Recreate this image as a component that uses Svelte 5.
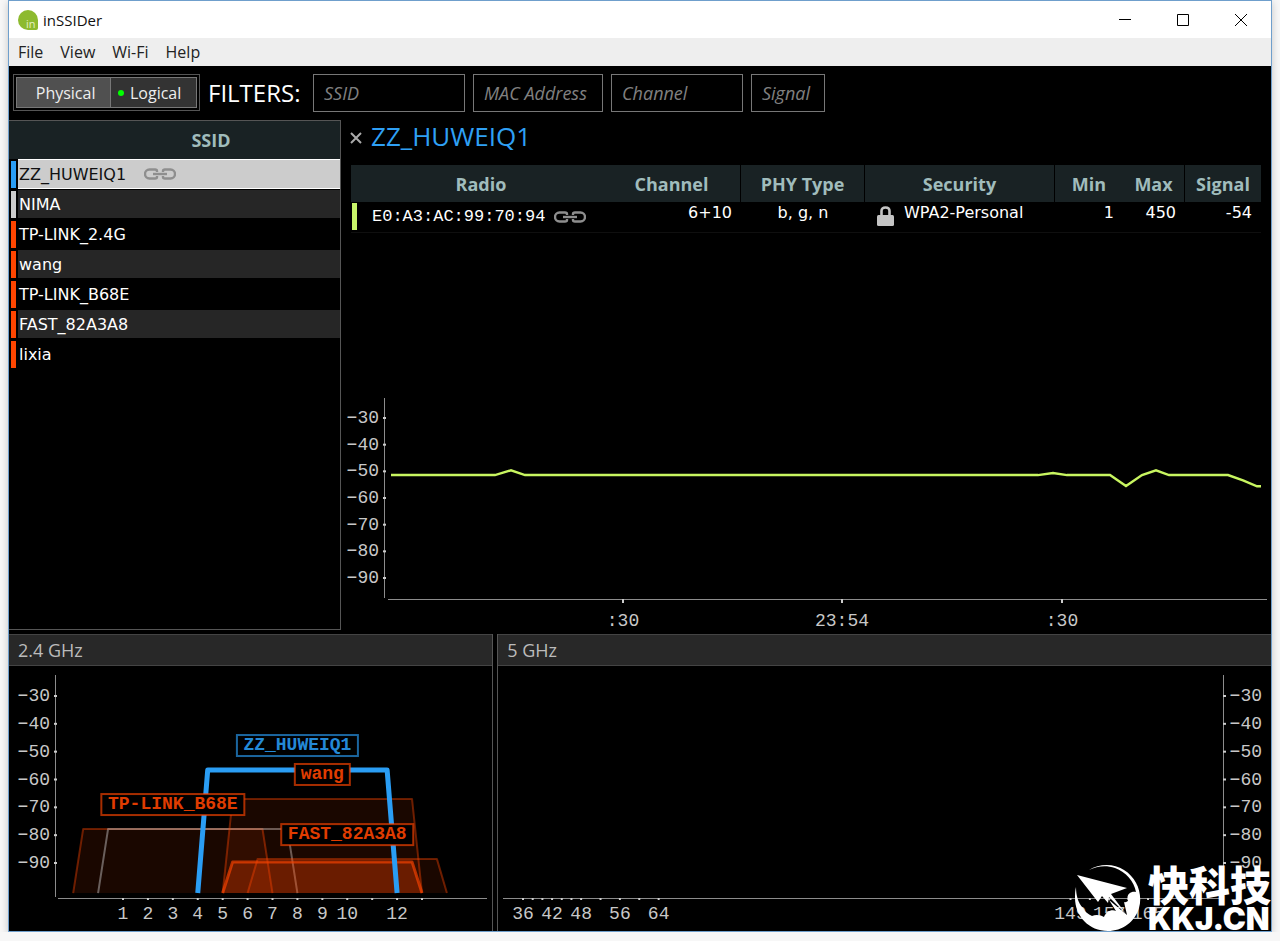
<script lang="ts">
interface Network {
  ssid: string;
  color: string;
  linked?: boolean;
}

interface Shape {
  from: number; // first channel
  to: number; // last channel
  dbm: number;
  color: string;
  line: number;
  stroke: number;
  fill: number;
  label?: string;
}

const BLUE = "#2a9df4";
const ORANGE = "#ff4500";

const menus = ["File", "View", "Wi-Fi", "Help"];

const filters = [
  { name: "SSID", width: 152 },
  { name: "MAC Address", width: 130 },
  { name: "Channel", width: 132 },
  { name: "Signal", width: 74 },
];

const networks: Network[] = [
  { ssid: "ZZ_HUWEIQ1", color: BLUE, linked: true },
  { ssid: "NIMA", color: "#cccccc" },
  { ssid: "TP-LINK_2.4G", color: ORANGE },
  { ssid: "wang", color: ORANGE },
  { ssid: "TP-LINK_B68E", color: ORANGE },
  { ssid: "FAST_82A3A8", color: ORANGE },
  { ssid: "lixia", color: ORANGE },
];

const columns = [
  { name: "Radio", width: 260 },
  { name: "Channel", width: 130 },
  { name: "PHY Type", width: 124 },
  { name: "Security", width: 190 },
  { name: "Min", width: 68 },
  { name: "Max", width: 62 },
  { name: "Signal", width: 76 },
];

const levels = [-30, -40, -50, -60, -70, -80, -90];

// [position on the time axis, dBm]
const history = [
  [0, -51.4], [104, -51.4], [120, -49.6], [134, -51.4], [647, -51.4],
  [662, -50.6], [676, -51.4], [719, -51.4], [735, -55.5], [751, -51.4],
  [765, -49.6], [778, -51.4], [837, -51.4], [852, -53.4], [866, -55.6], [870, -55.6],
];
const times = [
  { at: 232, text: ":30" },
  { at: 451, text: "23:54" },
  { at: 671, text: ":30" },
];

const shapes: Shape[] = [
  { from: -1, to: 7, dbm: -77.8, color: ORANGE, line: 2, stroke: 0.4, fill: 0.1, label: "TP-LINK_B68E" },
  { from: 0, to: 8, dbm: -77.8, color: "#cccccc", line: 2, stroke: 0.45, fill: 0 },
  { from: 5, to: 13, dbm: -67, color: ORANGE, line: 2, stroke: 0.4, fill: 0.1, label: "wang" },
  { from: 6, to: 14, dbm: -88.6, color: ORANGE, line: 2, stroke: 0.4, fill: 0.1, label: "FAST_82A3A8" },
  { from: 5, to: 13, dbm: -89.6, color: ORANGE, line: 3, stroke: 0.65, fill: 0.28 },
  { from: 4, to: 12, dbm: -56.6, color: BLUE, line: 5, stroke: 1, fill: 0, label: "ZZ_HUWEIQ1" },
];

const channels24 = [1, 2, 3, 4, 5, 6, 7, 8, 9, 10, 11, 12, 13];
const hidden24 = [11, 13];
const channels5 = [36, 38, 40, 42, 44, 46, 48, 52, 56, 60, 64, 149, 153, 157, 161, 165];
const labels5 = [36, 42, 48, 56, 64, 149, 157, 165];

let mode = $state("Logical");
let selected = $state("ZZ_HUWEIQ1");

let timeW = $state(930);
let w24 = $state(483);
let w5 = $state(773);
let h = $state(265);

const minus = (n: number) => "\u2212" + Math.abs(n);

// time graph
const timeX = (v: number) => 50 + (v / 870) * (timeW - 60);
const timeY = (dbm: number) => 24 + (-30 - dbm) * 2.667;
let trace = $derived(history.map(([t, d]) => `${timeX(t)},${timeY(d)}`).join(" "));

// channel graphs
let bandStep = $derived((h - 98) / 60);
const bandY = (dbm: number) => 30 + (-30 - dbm) * bandStep;
const x24 = (ch: number) => 114 + (ch - 1) * ((w24 - 184) / 12);
const x5 = (ch: number) => 25 + (ch - 36) * ((w5 - 148) / 129);

function outline(s: Shape) {
  const base = bandY(-100.8);
  const top = bandY(s.dbm);
  return `M${x24(s.from)} ${base}L${x24(s.from + 0.4)} ${top}H${x24(s.to - 0.4)}L${x24(s.to)} ${base}`;
}
</script>

{#snippet link()}
  <svg class="link" width="32" height="12" viewBox="0 0 32 12" aria-hidden="true">
    <path d="M13 4V3Q13 1.5 11 1.5H5.5A4.5 4.5 0 0 0 5.5 10.5H11Q13 10.5 13 9V8M19 4V3Q19 1.5 21 1.5H26.5A4.5 4.5 0 0 1 26.5 10.5H21Q19 10.5 19 9V8" />
    <path d="M9 6H23" />
  </svg>
{/snippet}

<div class="window">
  <header class="titlebar">
    <svg class="logo" width="20" height="20" viewBox="0 0 20 20" aria-hidden="true">
      <path d="M10 0A10 10 0 0 1 20 10V18Q20 20 18 20H10A10 10 0 0 1 10 0Z" fill="#8dba2f" />
      <text x="8" y="18" font-size="11" fill="#e4f0c4">in</text>
    </svg>
    <span class="title">inSSIDer</span>
    <button class="control" aria-label="Minimize">
      <svg width="12" height="12" viewBox="0 0 12 12"><path d="M0 5.5H12" /></svg>
    </button>
    <button class="control" aria-label="Maximize">
      <svg width="12" height="12" viewBox="0 0 12 12"><path d="M.5 .5H11.5V11.5H.5Z" /></svg>
    </button>
    <button class="control" aria-label="Close">
      <svg width="12" height="12" viewBox="0 0 12 12"><path d="M0 0L12 12M12 0L0 12" /></svg>
    </button>
  </header>

  <nav class="menu">
    {#each menus as item (item)}
      <button>{item}</button>
    {/each}
  </nav>

  <div class="toolbar">
    <div class="modes">
      {#each ["Physical", "Logical"] as m (m)}
        <button class:active={mode === m} aria-pressed={mode === m} onclick={() => (mode = m)}>
          <i></i>{m}
        </button>
      {/each}
    </div>
    <span class="filters-label">FILTERS:</span>
    {#each filters as f (f.name)}
      <input type="text" placeholder={f.name} aria-label={f.name} style:width="{f.width}px" />
    {/each}
  </div>

  <main>
    <section class="upper">
      <div class="sidebar">
        <table>
          <thead>
            <tr><th class="strip"></th><th class="ssid-head">SSID</th></tr>
          </thead>
          <tbody>
            {#each networks as n (n.ssid)}
              <tr class:selected={selected === n.ssid} onclick={() => (selected = n.ssid)}>
                <td class="strip"><i style:background={n.color}></i></td>
                <td class="ssid">
                  <span>{n.ssid}{#if n.linked}{@render link()}{/if}</span>
                </td>
              </tr>
            {/each}
          </tbody>
        </table>
      </div>

      <div class="detail">
        <h1>
          <button class="close" aria-label="Close network">
            <svg width="12" height="12" viewBox="0 0 12 12"><path d="M1 1L11 11M11 1L1 11" /></svg>
          </button>
          ZZ_HUWEIQ1
        </h1>
        <table class="radios">
          <colgroup>
            {#each columns as c (c.name)}
              <col style:width="{c.width}px" />
            {/each}
          </colgroup>
          <thead>
            <tr>
              {#each columns as c (c.name)}
                <th>{c.name}</th>
              {/each}
            </tr>
          </thead>
          <tbody>
            <tr>
              <td><span class="mac"><i></i>E0:A3:AC:99:70:94{@render link()}</span></td>
              <td class="num">6+10</td>
              <td class="phy">b, g, n</td>
              <td>
                <span class="security">
                  <svg width="17" height="20" viewBox="0 0 17 20" aria-hidden="true">
                    <path d="M4.5 10V5Q4.5 1.5 8.5 1.5T12.5 5V10" fill="none" stroke="#c4c4c4" stroke-width="2.6" />
                    <rect y="9" width="17" height="11" rx="1.5" fill="#c4c4c4" />
                  </svg>
                  WPA2-Personal
                </span>
              </td>
              <td class="num">1</td>
              <td class="num">450</td>
              <td class="num">-54</td>
            </tr>
          </tbody>
        </table>

        <div class="timegraph" bind:clientWidth={timeW}>
          <svg class="graph" width="100%" height="236">
            <path class="axis" d="M43.5 4V204M47 205.5H{timeW - 4}" />
            {#each levels as l (l)}
              <path class="tick" d="M42 {timeY(l)}h3" />
              <text x="38" y={timeY(l) + 5} text-anchor="end">{minus(l)}</text>
            {/each}
            {#each times as t (t.at)}
              <path class="tick" d="M{timeX(t.at)} 205v4" />
              <text x={timeX(t.at)} y="232" text-anchor="middle">{t.text}</text>
            {/each}
            <polyline points={trace} fill="none" stroke="#c8f560" stroke-width="2.4" />
          </svg>
        </div>
      </div>
    </section>

    <section class="lower">
      <div class="band narrow">
        <h2>2.4 GHz</h2>
        <div class="plot" bind:clientWidth={w24} bind:clientHeight={h}>
          <svg class="graph" width="100%" height="100%">
            <path class="axis" d="M46.5 9V{h - 34}M49 {h - 32.5}H{w24 - 5}" />
            {#each levels as l (l)}
              <path class="tick" d="M45 {bandY(l)}h3" />
              <text x="41" y={bandY(l) + 5} text-anchor="end">{minus(l)}</text>
            {/each}
            {#each channels24 as ch (ch)}
              <path class="tick" d="M{x24(ch)} {h - 33}v2" />
              {#if !hidden24.includes(ch)}
                <text x={x24(ch)} y={h - 12} text-anchor="middle">{ch}</text>
              {/if}
            {/each}
            {#each shapes as s, i (i)}
              <path
                d={outline(s)}
                fill={s.color}
                fill-opacity={s.fill}
                stroke={s.color}
                stroke-opacity={s.stroke}
                stroke-width={s.line}
                stroke-linejoin="round"
              />
            {/each}
            {#each shapes.filter((s) => s.label) as s (s.label)}
              {@const cx = x24((s.from + s.to) / 2)}
              {@const bw = s.label!.length * 11 + 11}
              <rect
                x={cx - bw / 2}
                y={bandY(s.dbm) - 35}
                width={bw}
                height="21"
                fill="#000"
                stroke={s.color}
                stroke-opacity="0.65"
                stroke-width="2"
              />
              <text class="tag" x={cx} y={bandY(s.dbm) - 20} text-anchor="middle" style:fill={s.color}>{s.label}</text>
            {/each}
          </svg>
        </div>
      </div>

      <div class="band wide">
        <h2>5 GHz</h2>
        <div class="plot" bind:clientWidth={w5}>
          <svg class="graph" width="100%" height="100%">
            <path class="axis" d="M{w5 - 47.5} 9V{h - 34}M5 {h - 32.5}H{w5 - 50}" />
            {#each levels as l (l)}
              <path class="tick" d="M{w5 - 48} {bandY(l)}h3" />
              <text x={w5 - 9} y={bandY(l) + 5} text-anchor="end">{minus(l)}</text>
            {/each}
            {#each channels5 as ch (ch)}
              <path class="tick" d="M{x5(ch)} {h - 33}v2" />
              {#if labels5.includes(ch)}
                <text x={x5(ch)} y={h - 12} text-anchor="middle">{ch}</text>
              {/if}
            {/each}
          </svg>
        </div>
      </div>
    </section>
  </main>

  <div class="watermark">
    <svg width="66" height="66" viewBox="0 0 66 66" aria-hidden="true">
      <path
        fill="#fff"
        d="M14 5C24-1 38-2 49 5C62 13 68 29 64 43C60 57 47 66 33 66C14 66 0 51 0 33C0 29 0 26 1 22C1 30 3 38 8 43C10 47 13 49 17 51C21 49 26 50 29 52C31 47 36 44 41 46L34 35L52 50L49 37C51 38 52 36 53 36C51 30 55 26 61 27C59 16 51 7 40 3C31 0 22 1 14 5Z"
      />
      <path fill="#fff" d="M2 10L52 23L36 29L51 49L34 32L33 38L27 31L23 37Z" />
    </svg>
    <div class="brand">
      <span class="cn">快科技</span>
      <span class="en">KKJ.CN</span>
    </div>
  </div>
</div>

<style>
:global(body) {
  background: #f7f7f7;
  font-family: "Open Sans", "Segoe UI", sans-serif;
}

.window {
  position: relative;
  display: flex;
  flex-direction: column;
  box-sizing: border-box;
  min-height: calc(100vh - 9px);
  margin: 0 8px;
  border: 1px solid #6f9fcc;
  background: #000;
  color: #fff;
  box-shadow: 0 2px 8px rgba(0, 0, 0, 0.2);
}

button {
  padding: 0;
  border: 0;
  background: none;
  color: inherit;
  font: inherit;
  cursor: pointer;
}

table {
  width: 100%;
  border-spacing: 0;
  table-layout: fixed;
}

th {
  box-sizing: border-box;
  height: 37px;
  padding: 0;
  background: #192224;
  color: #a0bcbc;
  font-size: 18px;
  line-height: 24px;
}

td {
  padding: 0;
}

/* title bar and menu */
.titlebar {
  display: flex;
  align-items: center;
  height: 37px;
  padding: 0 1px 0 9px;
  background: #fff;
  color: #111;
}

.title {
  flex: 1;
  margin-left: 5px;
  font-size: 15px;
  line-height: 20px;
}

.control {
  width: 58px;
  height: 35px;
}

.control svg {
  display: inline-block;
  fill: none;
  stroke: #000;
}

.menu {
  display: flex;
  gap: 17px;
  height: 28px;
  padding-left: 9px;
  background: #eee;
  color: #222;
  font-size: 16px;
}

/* toolbar */
.toolbar {
  display: flex;
  gap: 8px;
  padding: 8px 4px;
}

.modes {
  display: flex;
  box-sizing: border-box;
  width: 187px;
  height: 37px;
  padding: 2px;
  border: 1px solid #555;
}

.modes button {
  display: flex;
  flex: 1 0 auto;
  align-items: center;
  justify-content: center;
  gap: 6px;
  padding: 0 13px 0 5px;
  border: 1px solid #777;
  background: #505050;
  color: #eee;
  font-size: 16px;
}

.modes button + button {
  border-left: 0;
}

.modes button.active {
  background: #333;
}

.modes i {
  width: 6px;
  height: 6px;
  border-radius: 50%;
}

.modes .active i {
  background: #0f0;
}

.filters-label {
  box-sizing: border-box;
  width: 97px;
  font-size: 24px;
  line-height: 38px;
}

.toolbar input {
  box-sizing: border-box;
  height: 38px;
  padding: 0 10px;
  border: 1px solid #777;
  border-radius: 0;
  background: #000;
  color: #fff;
  font: 18px "Open Sans", sans-serif;
}

.toolbar input::placeholder {
  color: #808080;
  font-style: italic;
}

/* panes */
main {
  display: grid;
  flex: 1;
  grid-template-rows: minmax(510px, 510fr) minmax(240px, 297fr);
  gap: 4px;
}

.upper,
.lower {
  display: flex;
}

.sidebar {
  box-sizing: border-box;
  width: 332px;
  border: 1px solid #555;
  border-left: 0;
  font-family: "DejaVu Sans", Tahoma, sans-serif;
  font-size: 16px;
}

.sidebar th {
  height: 38px;
  font-family: "Open Sans", sans-serif;
}

.strip {
  width: 9px;
}

.ssid-head {
  padding-left: 64px;
}

.strip i {
  display: block;
  width: 5px;
  height: 27px;
  margin-left: 2px;
}

.sidebar td {
  height: 28px;
  border-top: 1px solid #000;
  border-bottom: 1px solid #000;
}

.ssid span {
  display: flex;
  align-items: center;
  height: 28px;
  padding-left: 1px;
}

.sidebar tr:nth-child(even) .ssid {
  background: #262626;
}

.sidebar .selected .ssid {
  border-color: #fff;
  background: #ccc;
  color: #111;
}

.link {
  margin-left: 13px;
  fill: none;
  stroke: #8e8e8e;
  stroke-width: 2.4;
}

.sidebar .link {
  margin-left: 18px;
}

.detail {
  display: flex;
  flex: 1;
  flex-direction: column;
  min-width: 0;
}

h1 {
  display: flex;
  gap: 9px;
  height: 45px;
  margin: 0;
  padding-left: 9px;
  color: #2fa0f5;
  font-size: 26px;
  font-weight: 400;
  line-height: 32px;
}

.close {
  display: flex;
  align-items: center;
  height: 36px;
}

.close svg {
  stroke: #aaa;
  stroke-width: 2;
}

.radios {
  width: auto;
  margin: 0 10px;
  font-family: "DejaVu Sans", Tahoma, sans-serif;
  font-size: 16px;
}

.radios th {
  font-family: "Open Sans", sans-serif;
}

.radios th:nth-child(2) {
  padding-right: 8px;
}

.radios th:nth-child(2),
.radios th:nth-child(3),
.radios th:nth-child(4),
.radios th:nth-child(6) {
  border-right: 1px solid #000;
}

.radios td {
  height: 30px;
  border-bottom: 1px solid #0f0f0f;
  line-height: 22px;
  vertical-align: top;
}

.mac {
  display: flex;
  align-items: center;
  height: 29px;
  font-family: "Liberation Mono", monospace;
  font-size: 17px;
}

.mac i {
  width: 5px;
  height: 27px;
  margin: 0 15px 0 1px;
  background: #c8f56a;
}

.mac .link {
  margin-left: 9px;
}

.num {
  padding-right: 9px;
  text-align: right;
}

.phy {
  text-align: center;
}

.security {
  display: flex;
  gap: 10px;
  padding-left: 12px;
}

.security svg {
  margin-top: 4px;
}

/* graphs */
.timegraph {
  height: 236px;
  margin-top: auto;
}

.graph {
  display: block;
  font-family: "Liberation Mono", monospace;
  font-size: 18px;
}

.graph text {
  fill: #c8c8c8;
}

.graph .tag {
  font-weight: 700;
  opacity: 0.88;
}

.axis {
  fill: none;
  stroke: #8c8c8c;
}

.tick {
  stroke: #ccc;
  stroke-width: 2;
}

.lower {
  gap: 4px;
}

.band {
  display: flex;
  flex-direction: column;
  box-sizing: border-box;
  min-width: 0;
}

.narrow {
  flex: 484;
  border-right: 1px solid #555;
}

.wide {
  flex: 774;
  border-left: 1px solid #555;
}

h2 {
  box-sizing: border-box;
  height: 32px;
  margin: 0;
  padding-left: 9px;
  border: solid #444;
  border-width: 1px 0;
  background: #282828;
  color: #bbb;
  font-size: 18px;
  font-weight: 400;
  line-height: 30px;
}

.plot {
  flex: 1;
  min-height: 0;
}

.plot svg {
  display: block;
}

.watermark {
  position: absolute;
  right: 0;
  bottom: 0;
  display: flex;
  align-items: flex-end;
  gap: 7px;
}

.brand {
  display: flex;
  flex-direction: column;
  gap: 3px;
}

.cn {
  font: 900 41px/42px "Noto Sans CJK SC", sans-serif;
}

.en {
  font: 900 31px/24px Inter, "Open Sans", sans-serif;
}
</style>
